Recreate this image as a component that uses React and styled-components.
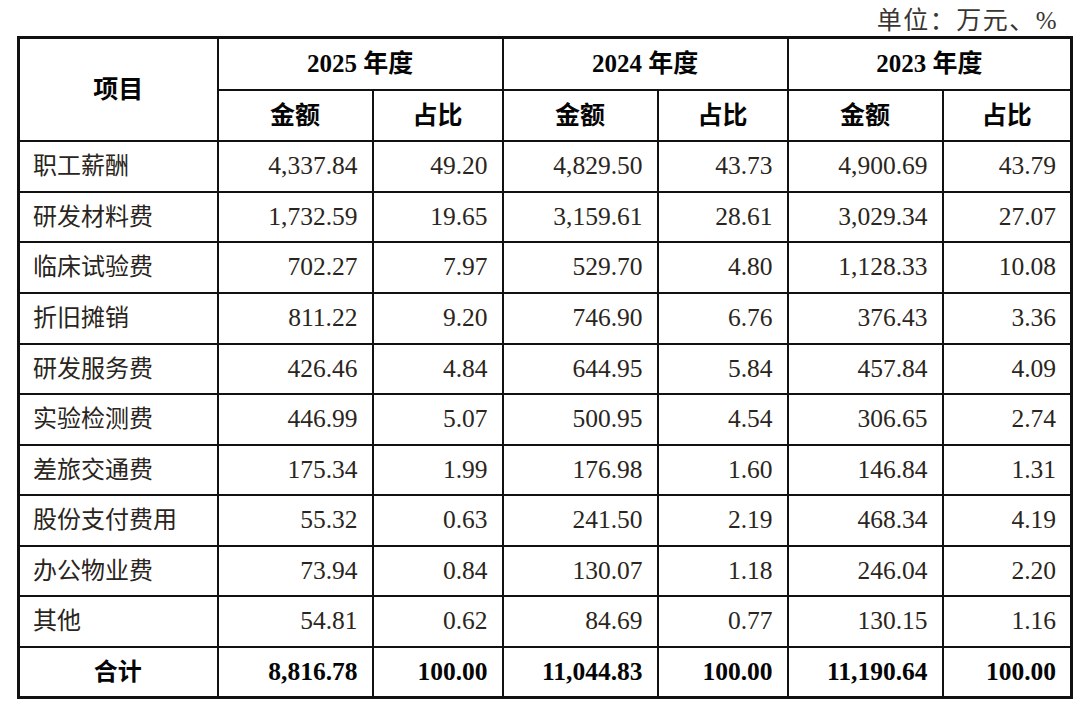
import React from "react";
import styled, { createGlobalStyle } from "styled-components";

const GlobalStyle = createGlobalStyle`
  html, body {
    margin: 0;
    padding: 0;
    background: #ffffff;
  }
  body {
    font-family: "Liberation Serif", "Noto Sans CJK SC", serif;
  }
`;

const rows = [
    ["职工薪酬", "4,337.84", "49.20", "4,829.50", "43.73", "4,900.69", "43.79"],
    ["研发材料费", "1,732.59", "19.65", "3,159.61", "28.61", "3,029.34", "27.07"],
    ["临床试验费", "702.27", "7.97", "529.70", "4.80", "1,128.33", "10.08"],
    ["折旧摊销", "811.22", "9.20", "746.90", "6.76", "376.43", "3.36"],
    ["研发服务费", "426.46", "4.84", "644.95", "5.84", "457.84", "4.09"],
    ["实验检测费", "446.99", "5.07", "500.95", "4.54", "306.65", "2.74"],
    ["差旅交通费", "175.34", "1.99", "176.98", "1.60", "146.84", "1.31"],
    ["股份支付费用", "55.32", "0.63", "241.50", "2.19", "468.34", "4.19"],
    ["办公物业费", "73.94", "0.84", "130.07", "1.18", "246.04", "2.20"],
    ["其他", "54.81", "0.62", "84.69", "0.77", "130.15", "1.16"],
];

// row heights read off the reference (they alternate 50/51 px)
const rowHeights = [51, 50, 51, 51, 50, 51, 50, 51, 50, 51];

const total = ["合计", "8,816.78", "100.00", "11,044.83", "100.00", "11,190.64", "100.00"];

const years = ["2025", "2024", "2023"];

const colWidths = [199, 155, 130, 155, 130, 155, 129];

const Page = styled.div`
  width: 1080px;
  height: 707px;
  overflow: hidden;
  color: #2a2520;
`;

const UnitLine = styled.div`
  height: 36px;
  display: flex;
  justify-content: flex-end;
  align-items: center;
  padding-right: 22px;
  font-size: 25px;
  letter-spacing: 1.5px;
  color: #3a3530;
`;

const Table = styled.table`
  margin-left: 17px;
  width: 1054px;
  table-layout: fixed;
  border-collapse: collapse;
  border: 3px solid #111;
  font-size: 25px;
`;

const HeadCell = styled.th`
  border: 2px solid #111;
  text-align: center;
  vertical-align: middle;
  font-weight: 700;
  font-size: 25px;
  color: #050505;
  padding: 0;
  line-height: 1;
`;

const Row = styled.tr`
  height: ${({ h }) => h}px;
`;

const Cell = styled.td`
  border: 2px solid #111;
  padding: 0 14px 0 13px;
  line-height: 1;
  vertical-align: middle;
  white-space: nowrap;
  text-align: ${({ align }) => align || "right"};
  font-weight: ${({ bold }) => (bold ? 700 : 400)};
  font-size: ${({ cjk }) => (cjk ? 24 : 25.5)}px;
  color: ${({ bold }) => (bold ? "#050505" : "#2a2520")};
`;

function App() {
    return (
        <>
            <GlobalStyle />
            <Page>
                <UnitLine>单位：万元、%</UnitLine>
                <Table>
                    <colgroup>
                        {colWidths.map((w, i) => (
                            <col key={i} style={{ width: w }} />
                        ))}
                    </colgroup>
                    <thead>
                        <Row h={52}>
                            <HeadCell rowSpan={2}>项目</HeadCell>
                            {years.map((y) => (
                                <HeadCell key={y} colSpan={2}>
                                    {y} 年度
                                </HeadCell>
                            ))}
                        </Row>
                        <Row h={51}>
                            {years.map((y) => (
                                <React.Fragment key={y}>
                                    <HeadCell>金额</HeadCell>
                                    <HeadCell>占比</HeadCell>
                                </React.Fragment>
                            ))}
                        </Row>
                    </thead>
                    <tbody>
                        {rows.map((r, idx) => (
                            <Row key={r[0]} h={rowHeights[idx]}>
                                <Cell align="left" cjk>{r[0]}</Cell>
                                {r.slice(1).map((v, i) => (
                                    <Cell key={i}>{v}</Cell>
                                ))}
                            </Row>
                        ))}
                        <Row h={51}>
                            <Cell align="center" bold cjk>{total[0]}</Cell>
                            {total.slice(1).map((v, i) => (
                                <Cell key={i} bold>{v}</Cell>
                            ))}
                        </Row>
                    </tbody>
                </Table>
            </Page>
        </>
    );
}

export default App;
